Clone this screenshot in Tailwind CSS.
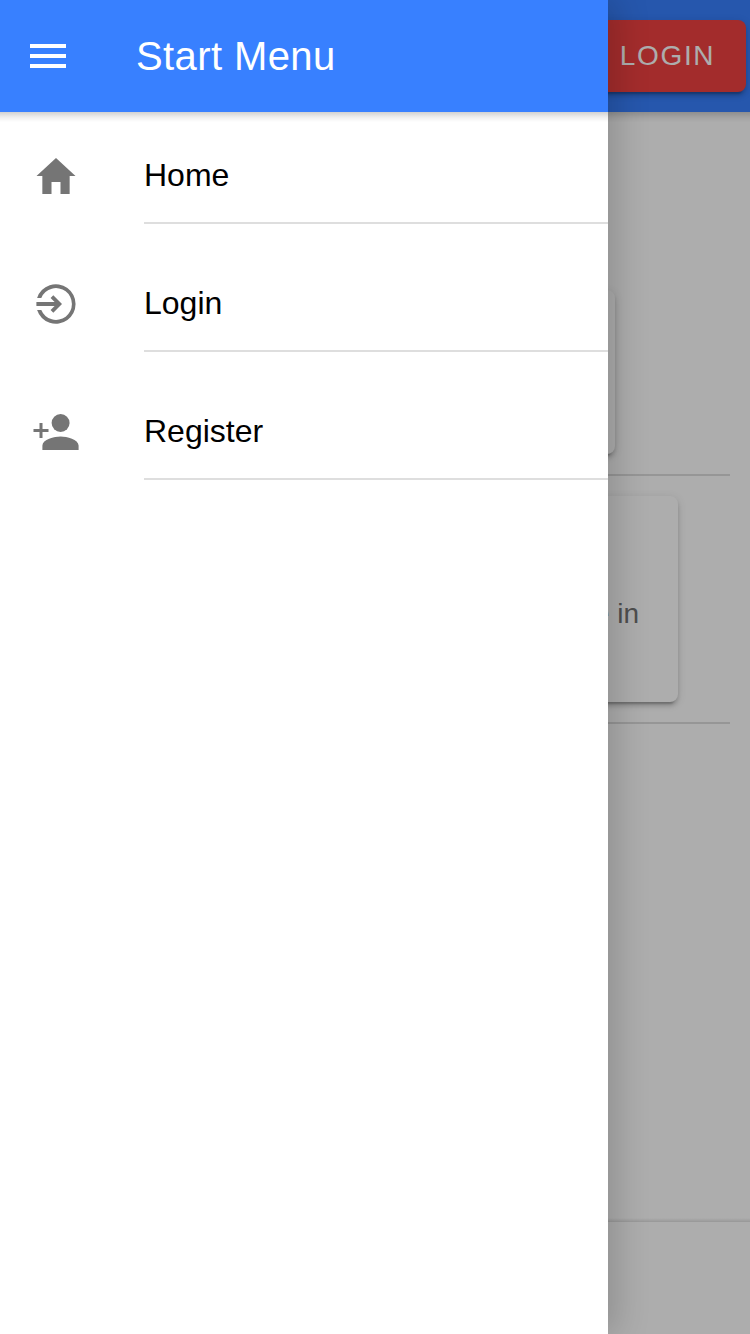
<!DOCTYPE html>
<html lang="en">
<head>
<meta charset="utf-8">
<title>Start Menu</title>
<script src="https://cdn.jsdelivr.net/npm/@tailwindcss/browser@4"></script>
</head>
<body class="relative h-[1334px] w-[750px] overflow-hidden bg-white font-['Liberation_Sans',Arial,sans-serif]">
  <!-- Page behind the menu -->
  <div class="flex h-full flex-col">
    <header class="relative flex h-28 shrink-0 items-center justify-end bg-[#3880ff] pr-1">
      <button class="flex h-[72px] w-[158px] items-center justify-center rounded-lg bg-[#f04141] pl-px text-[28px] tracking-[1.68px] text-white shadow-[0_6px_2px_-4px_rgba(0,0,0,.2),0_4px_4px_0_rgba(0,0,0,.14),0_2px_10px_0_rgba(0,0,0,.12)]">LOGIN</button>
      <div class="absolute inset-x-0 top-full h-2.5 bg-linear-to-b from-black/18 via-black/7 to-transparent"></div>
    </header>
    <main class="flex grow flex-col px-5">
      <section class="flex h-[364px] flex-col items-center justify-end border-b-2 border-[#dedede] pb-5">
        <div class="h-[164px] w-[480px] rounded-lg bg-white shadow-[0_6px_2px_-4px_rgba(0,0,0,.2),0_4px_4px_0_rgba(0,0,0,.14),0_2px_10px_0_rgba(0,0,0,.12)]"></div>
      </section>
      <section class="flex h-[248px] flex-col items-center border-b-2 border-[#dedede] pt-5">
        <div class="flex h-[206px] w-[606px] items-center justify-end rounded-lg bg-white pt-[29px] pr-[39px] text-[28px] text-[#737373] shadow-[0_6px_2px_-4px_rgba(0,0,0,.2),0_4px_4px_0_rgba(0,0,0,.14),0_2px_10px_0_rgba(0,0,0,.12)]">e in</div>
      </section>
    </main>
    <footer class="relative h-28 shrink-0">
      <div class="absolute inset-x-0 bottom-full h-1 bg-linear-to-t from-black/12 to-transparent"></div>
    </footer>
  </div>
  <div class="absolute inset-0 bg-black/32"></div>

  <!-- Side menu -->
  <aside class="absolute inset-y-0 left-0 w-[608px] bg-white shadow-[8px_0_32px_rgba(0,0,0,.18)]">
    <div class="relative flex h-28 items-center bg-[#3880ff] pl-[30px] text-white">
      <svg class="h-6 w-9" viewBox="0 0 36 24" fill="currentColor"><path d="M0 0h36v4H0zM0 10h36v4H0zM0 20h36v4H0z"/></svg>
      <h1 class="pl-[70px] text-[40px] tracking-[.4px]">Start Menu</h1>
      <div class="absolute inset-x-0 top-full h-2.5 bg-linear-to-b from-black/18 via-black/7 to-transparent"></div>
    </div>
    <nav class="flex flex-col text-[32px] text-black">
      <a class="flex h-32 items-center pl-8">
        <svg class="h-12 w-12 text-[#757575]" viewBox="0 0 512 512" fill="currentColor"><path d="M208 448V320h96v128h97.600V256H464L256 64 48 256h62.400v192z"/></svg>
        <span class="mt-4 ml-16 flex h-24 grow items-center self-start border-b-2 border-[#dedede]">Home</span>
      </a>
      <a class="flex h-32 items-center pl-8">
        <svg class="h-12 w-12 text-[#757575]" viewBox="0 0 48 48" fill="currentColor"><path d="M5.100 18A19.700 19.700 0 1 1 5.100 30H9.300A15.900 15.900 0 1 0 9.300 18zM4.400 22H22.600L18.600 18.100 21.300 15.300 30 24 21.300 32.700 18.600 29.900 22.600 26H4.400z"/></svg>
        <span class="mt-4 ml-16 flex h-24 grow items-center self-start border-b-2 border-[#dedede]">Login</span>
      </a>
      <a class="flex h-32 items-center pl-8">
        <svg class="h-12 w-12 text-[#757575]" viewBox="0 0 48 48" fill="currentColor"><circle cx="28.600" cy="15" r="9"/><path d="M10.400 42v-4.500c0-6 12-9 18.200-9s18 3 18 9V42zM7.500 15h3v6h6v3h-6v6h-3v-6h-6v-3h6z"/></svg>
        <span class="mt-4 ml-16 flex h-24 grow items-center self-start border-b-2 border-[#dedede]">Register</span>
      </a>
    </nav>
  </aside>
</body>
</html>
